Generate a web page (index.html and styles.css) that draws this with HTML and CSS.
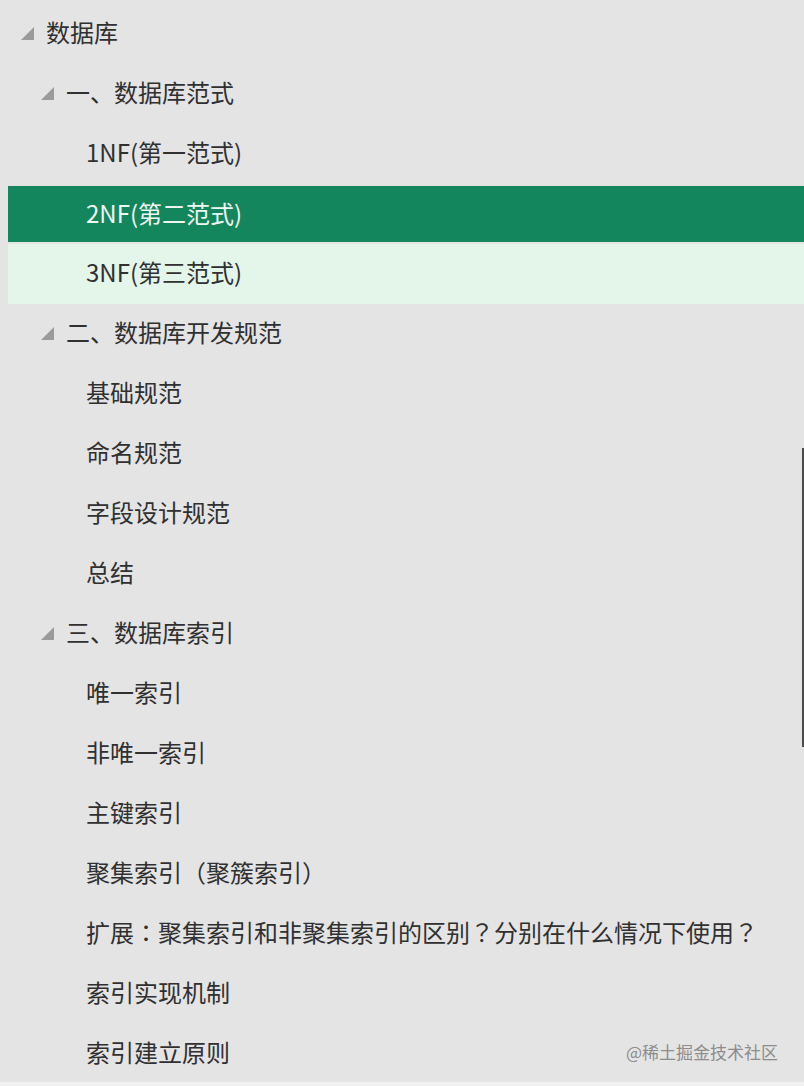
FILE: index.html
```html
<!DOCTYPE html>
<html lang="zh-CN">
<head>
	<meta charset="UTF-8">
	<title>导航</title>
	<link rel="stylesheet" href="styles.css">
</head>
<body>
	<div class="pane">
		<ul class="tree">
			<li class="node lv0"><span class="arrow"><svg viewBox="0 0 13 13"><polygon points="13,0 13,13 0,13"/></svg></span>数据库</li>
			<li class="node lv1"><span class="arrow"><svg viewBox="0 0 13 13"><polygon points="13,0 13,13 0,13"/></svg></span>一、数据库范式</li>
			<li class="node lv2"><span class="arrow"></span>1NF(第一范式)</li>
			<li class="node lv2 selected"><span class="arrow"></span>2NF(第二范式)</li>
			<li class="node lv2 hover"><span class="arrow"></span>3NF(第三范式)</li>
			<li class="node lv1"><span class="arrow"><svg viewBox="0 0 13 13"><polygon points="13,0 13,13 0,13"/></svg></span>二、数据库开发规范</li>
			<li class="node lv2"><span class="arrow"></span>基础规范</li>
			<li class="node lv2"><span class="arrow"></span>命名规范</li>
			<li class="node lv2"><span class="arrow"></span>字段设计规范</li>
			<li class="node lv2"><span class="arrow"></span>总结</li>
			<li class="node lv1"><span class="arrow"><svg viewBox="0 0 13 13"><polygon points="13,0 13,13 0,13"/></svg></span>三、数据库索引</li>
			<li class="node lv2"><span class="arrow"></span>唯一索引</li>
			<li class="node lv2"><span class="arrow"></span>非唯一索引</li>
			<li class="node lv2"><span class="arrow"></span>主键索引</li>
			<li class="node lv2"><span class="arrow"></span><span>聚集索引<span class="punct" lang="zh-TW">（</span>聚簇索引<span class="punct" lang="zh-TW">）</span></span></li>
			<li class="node lv2"><span class="arrow"></span><span>扩展<span class="punct" lang="zh-TW">：</span>聚集索引和非聚集索引的区别<span class="punct" lang="zh-TW">？</span>分别在什么情况下使用<span class="punct" lang="zh-TW">？</span></span></li>
			<li class="node lv2"><span class="arrow"></span>索引实现机制</li>
			<li class="node lv2"><span class="arrow"></span>索引建立原则</li>
		</ul>
		<div class="scroll-thumb"></div>
		<div class="watermark">@稀土掘金技术社区</div>
	</div>
</body>
</html>
```

FILE: styles.css
```css
html, body {
	margin: 0;
	padding: 0;
}
body {
	background-color: #f2f2f2;
	font-family: "Noto Sans CJK SC", "Noto Sans", sans-serif;
}

.pane {
	position: relative;
	height: 1082px;
	overflow: hidden;
	background-color: #e5e4e5;
}

.tree {
	margin: 0;
	padding: 4px 0 0 8px;
	list-style: none;
}
.node {
	display: flex;
	align-items: center;
	gap: 12px;
	box-sizing: border-box;
	height: 60px;
	padding-bottom: 5px;
	color: #303030;
	font-size: 24px;
	white-space: nowrap;
}
.lv0 { padding-left: 13px; }
.lv1 { padding-left: 33px; }
.lv2 { padding-left: 53px; }

.node.selected {
	height: 56px;
	margin: 2px 0;
	padding-bottom: 4px;
	background-color: #13865d;
	color: #eef8f3;
}
.node.hover {
	background-color: #e4f5ea;
}

.punct {
	font-family: "Noto Sans CJK TC", sans-serif;
}

.arrow {
	display: inline-block;
	flex: none;
	width: 13px;
	height: 13px;
	margin-top: 3px;
}
.arrow svg {
	display: block;
	width: 13px;
	height: 13px;
	fill: #9a9a9a;
}

.scroll-thumb {
	position: absolute;
	top: 448px;
	right: 0;
	width: 2px;
	height: 299px;
	background-color: #4a4a4a;
}

.watermark {
	position: absolute;
	top: 1038px;
	right: 26px;
	color: #8c8c8c;
	font-size: 17px;
	line-height: 28px;
}
```
